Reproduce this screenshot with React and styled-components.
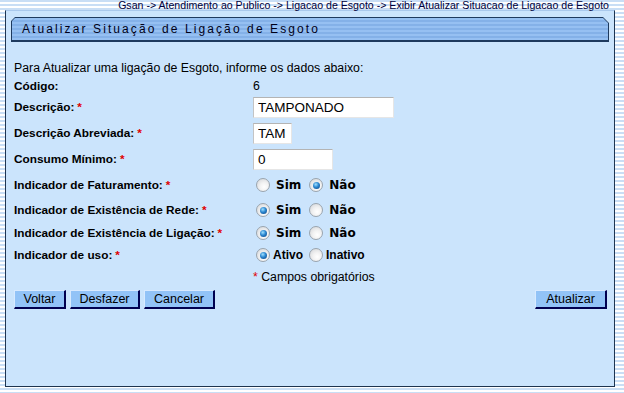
import React from 'react';
import styled, { createGlobalStyle } from 'styled-components';

const GlobalStyle = createGlobalStyle`
  html, body {
    margin: 0;
    padding: 0;
    height: 100%;
  }
  body {
    font-family: "Liberation Sans", Arial, sans-serif;
    background: repeating-linear-gradient(180deg, #c9def5 0 2px, #ffffff 2px 4px);
    overflow: hidden;
  }
`;

// Breadcrumb trail at the very top
const Breadcrumb = styled.div`
  height: 10px;
  line-height: 10px;
  font-size: 10.6px;
  color: #00003a;
  text-align: right;
  padding-right: 15px;
  white-space: nowrap;
`;

// Main light blue panel
const Panel = styled.div`
  margin: 0 9px 0 5px;
  height: 377px;
  box-sizing: border-box;
  background: #cbe4fc;
  border: 1px solid #1e3450;
  border-top-color: #a9c8ec;
  padding: 6px 5px 0 5px;
`;

// Chamfered title bar
const TitleBar = styled.div`
  height: 25px;
  background: #1e3a5e;
  clip-path: polygon(4px 0, calc(100% - 6px) 0, 100% 6px, 100% 100%, 0 100%, 0 4px);
  padding: 1px 1px 2px 1px;
  box-sizing: border-box;
`;

const TitleInner = styled.div`
  height: 100%;
  background: repeating-linear-gradient(180deg, #96c0f2 0 2px, #84b1e8 2px 4px);
  clip-path: polygon(3px 0, calc(100% - 5px) 0, 100% 5px, 100% 100%, 0 100%, 0 3px);
  display: flex;
  align-items: center;
  padding-left: 10px;
  font-size: 12px;
  letter-spacing: 2.1px;
  color: #000018;
`;

const Content = styled.div`
  margin-top: 18px;
  padding: 0 2px 0 3px;
`;

const Intro = styled.div`
  height: 16px;
  line-height: 16px;
  font-size: 12.3px;
  color: #000;
  margin-bottom: 2px;
`;

const FormRow = styled.div`
  display: grid;
  grid-template-columns: 239px 1fr;
  align-items: center;
  height: ${p => p.$h}px;
`;

const Label = styled.div`
  font-size: 11.8px;
  font-weight: bold;
  color: #000;
  white-space: nowrap;
`;

const Req = styled.span`
  color: #e00000;
  margin-left: 3px;
`;

const Value = styled.div`
  font-size: 12.3px;
  color: #000;
  display: flex;
  align-items: center;
`;

const TextInput = styled.input`
  box-sizing: border-box;
  width: ${p => p.$w}px;
  height: 21px;
  margin: 0;
  padding: 0 4px;
  font-family: "Liberation Sans", Arial, sans-serif;
  font-size: 13.5px;
  color: #000;
  background: #fff;
  border: 1px solid #e6e6e6;
  border-top-color: #b4b4b4;
  border-left-color: #c4c4c4;
  outline: none;
`;

const RadioGroup = styled.div`
  display: flex;
  align-items: center;
  padding-left: ${p => p.$pad}px;
`;

const Radio = styled.span`
  position: relative;
  width: 12px;
  height: 12px;
  border-radius: 50%;
  border: 1px solid #9aa4ae;
  background: radial-gradient(circle at 60% 65%, #ffffff 0%, #f2f2f2 40%, #cfd2d6 100%);
  flex: none;

  &::after {
    content: '';
    display: ${p => (p.$checked ? 'block' : 'none')};
    position: absolute;
    left: 2.5px;
    top: 2.5px;
    width: 7px;
    height: 7px;
    border-radius: 50%;
    background: radial-gradient(circle at 40% 35%, #9fe0ff 0%, #2a86d0 45%, #0b3c78 100%);
  }
`;

const Option = styled.span`
  font-family: ${p => (p.$wide ? '"DejaVu Sans", Verdana, sans-serif' : '"Liberation Sans", Arial, sans-serif')};
  font-size: 12px;
  font-weight: bold;
  color: #000;
  margin-left: ${p => p.$ml}px;
  margin-right: ${p => p.$mr}px;
`;

const Note = styled.div`
  font-size: 12.3px;
  color: #000;
  span {
    color: #e00000;
  }
`;

const ButtonBar = styled.div`
  display: flex;
  gap: 4px;
  margin-top: 2px;
`;

const Button = styled.button`
  box-sizing: border-box;
  width: ${p => p.$w}px;
  height: 19px;
  margin: 0;
  padding: 0;
  font-family: "Liberation Sans", Arial, sans-serif;
  font-size: 12.5px;
  color: #000;
  background: #92c3f7;
  border: 1px solid;
  border-color: #d8eaff #000050 #000050 #d8eaff;
  border-width: 1px 2px 2px 1px;
  cursor: pointer;
  ${p => p.$right && 'margin-left: auto;'}
`;

const YesNo = ({ yes }) => (
  <RadioGroup $pad={3}>
    <Radio $checked={yes} />
    <Option $wide $ml={6} $mr={8}>Sim</Option>
    <Radio $checked={!yes} />
    <Option $wide $ml={6} $mr={0}>Não</Option>
  </RadioGroup>
);

export default function App() {
  return (
    <>
      <GlobalStyle />
      <Breadcrumb>
        Gsan -&gt; Atendimento ao Publico -&gt; Ligacao de Esgoto -&gt; Exibir Atualizar Situacao de Ligacao de Esgoto
      </Breadcrumb>
      <Panel>
        <TitleBar>
          <TitleInner>Atualizar Situação de Ligação de Esgoto</TitleInner>
        </TitleBar>
        <Content>
          <Intro>Para Atualizar uma ligação de Esgoto, informe os dados abaixo:</Intro>
          <FormRow $h={16}>
            <Label>Código:</Label>
            <Value>6</Value>
          </FormRow>
          <FormRow $h={26}>
            <Label>Descrição:<Req>*</Req></Label>
            <Value><TextInput $w={141} defaultValue="TAMPONADO" /></Value>
          </FormRow>
          <FormRow $h={26}>
            <Label>Descrição Abreviada:<Req>*</Req></Label>
            <Value><TextInput $w={39} defaultValue="TAM" /></Value>
          </FormRow>
          <FormRow $h={26}>
            <Label>Consumo Mínimo:<Req>*</Req></Label>
            <Value><TextInput $w={80} defaultValue="0" /></Value>
          </FormRow>
          <FormRow $h={26}>
            <Label>Indicador de Faturamento:<Req>*</Req></Label>
            <YesNo yes={false} />
          </FormRow>
          <FormRow $h={24}>
            <Label>Indicador de Existência de Rede:<Req>*</Req></Label>
            <YesNo yes />
          </FormRow>
          <FormRow $h={22}>
            <Label>Indicador de Existência de Ligação:<Req>*</Req></Label>
            <YesNo yes />
          </FormRow>
          <FormRow $h={22}>
            <Label>Indicador de uso:<Req>*</Req></Label>
            <RadioGroup $pad={3}>
              <Radio $checked />
              <Option $ml={3} $mr={6}>Ativo</Option>
              <Radio />
              <Option $ml={3} $mr={0}>Inativo</Option>
            </RadioGroup>
          </FormRow>
          <FormRow $h={22}>
            <div />
            <Note><span>*</span> Campos obrigatórios</Note>
          </FormRow>
          <ButtonBar>
            <Button $w={52}>Voltar</Button>
            <Button $w={70}>Desfazer</Button>
            <Button $w={71}>Cancelar</Button>
            <Button $w={72} $right>Atualizar</Button>
          </ButtonBar>
        </Content>
      </Panel>
    </>
  );
}
